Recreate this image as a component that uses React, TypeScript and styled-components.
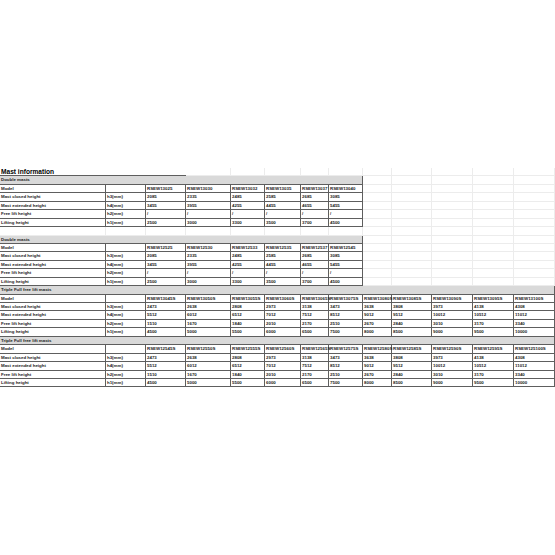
import React from "react";
import styled, { createGlobalStyle } from "styled-components";

const GlobalStyle = createGlobalStyle`
  html, body {
    margin: 0;
    padding: 0;
    background: #ffffff;
  }
  body {
    font-family: "Liberation Sans", Arial, sans-serif;
    color: #000000;
  }
`;

const COLUMNS = "106px 40px 40px 45px 34px 36px 28px 34px 29px 40px 41px 41px 41px";

type Row = { label: string; unit: string; values: string[] };

interface Section {
  title: string;
  models: string[];
  rows: Row[];
}

const doubleRows: Row[] = [
  { label: "Mast closed height", unit: "h3(mm)", values: ["2085", "2335", "2485", "2585", "2685", "3085"] },
  { label: "Mast extended height", unit: "h4(mm)", values: ["3455", "3955", "4255", "4455", "4655", "5455"] },
  { label: "Free lift height", unit: "h2(mm)", values: ["/", "/", "/", "/", "/", "/"] },
  { label: "Lifting height", unit: "h1(mm)", values: ["2500", "3000", "3300", "3500", "3700", "4500"] },
];

const tripleRows: Row[] = [
  {
    label: "Mast closed height",
    unit: "h3(mm)",
    values: ["2473", "2638", "2808", "2973", "3138", "3473", "3638", "3808", "3973", "4138", "4308"],
  },
  {
    label: "Mast extended height",
    unit: "h4(mm)",
    values: ["5512", "6012", "6512", "7012", "7512", "8512", "9012", "9512", "10012", "10512", "11012"],
  },
  {
    label: "Free lift height",
    unit: "h2(mm)",
    values: ["1510", "1670", "1840", "2010", "2170", "2510", "2670", "2840", "3010", "3170", "3340"],
  },
  {
    label: "Lifting height",
    unit: "h1(mm)",
    values: ["4500", "5000", "5500", "6000", "6500", "7500", "8000", "8500", "9000", "9500", "10000"],
  },
];

const sections: Section[] = [
  {
    title: "Double masts",
    models: ["RSEW13025", "RSEW13030", "RSEW13032", "RSEW13035", "RSEW13037", "RSEW13040"],
    rows: doubleRows,
  },
  {
    title: "Double masts",
    models: ["RSEW12525", "RSEW12530", "RSEW12533", "RSEW12535", "RSEW12537", "RSEW12545"],
    rows: doubleRows,
  },
  {
    title: "Triple Full free lift masts",
    models: [
      "RSEW13045S", "RSEW13050S", "RSEW13055S", "RSEW13060S", "RSEW13065S", "RSEW13075S",
      "RSEW13080S", "RSEW13085S", "RSEW13090S", "RSEW13095S", "RSEW13100S",
    ],
    rows: tripleRows,
  },
  {
    title: "Triple Full free lift masts",
    models: [
      "RSEW12545S", "RSEW12550S", "RSEW12555S", "RSEW12560S", "RSEW12565S", "RSEW12575S",
      "RSEW12580S", "RSEW12585S", "RSEW12590S", "RSEW12595S", "RSEW125100S",
    ],
    rows: tripleRows,
  },
];

const TOTAL_COLS = 13;

const App = (): JSX.Element => {
  const renderFaint = (count: number, keyBase: string) =>
    Array.from({ length: count }).map((_, i) => <FaintCell key={`${keyBase}-${i}`} />);

  return (
    <>
      <GlobalStyle />
      <Page>
        <Sheet>
          <TitleCell>Mast information</TitleCell>
          {renderFaint(TOTAL_COLS - 3, "title")}

          {sections.map((section, s) => {
            const used = 2 + section.models.length;
            const spare = TOTAL_COLS - used;
            return (
              <React.Fragment key={s}>
                {s === 1 && renderFaint(TOTAL_COLS, "gap")}
                <Band span={used}>{section.title}</Band>
                {renderFaint(spare, `band-${s}`)}

                <Cell>Model</Cell>
                <Cell />
                {section.models.map((m) => (
                  <Cell key={m}>{m}</Cell>
                ))}
                {renderFaint(spare, `model-${s}`)}

                {section.rows.map((row, r) => (
                  <React.Fragment key={row.label}>
                    <Cell>{row.label}</Cell>
                    <Cell>{row.unit}</Cell>
                    {row.values.map((v, i) => (
                      <Cell key={i}>{v}</Cell>
                    ))}
                    {renderFaint(spare, `row-${s}-${r}`)}
                  </React.Fragment>
                ))}
              </React.Fragment>
            );
          })}
        </Sheet>
      </Page>
    </>
  );
};

export default App;

const Page = styled.div`
  width: 555px;
  height: 555px;
  padding-top: 168px;
  box-sizing: border-box;
  overflow: hidden;
`;

const Sheet = styled.div`
  display: grid;
  grid-template-columns: ${COLUMNS};
  grid-auto-rows: 8.45px;
`;

const Cell = styled.div`
  box-sizing: border-box;
  border-right: 1px solid #5e5e5e;
  border-bottom: 1px solid #5e5e5e;
  font-size: 4.4px;
  font-weight: 700;
  line-height: 7.4px;
  padding-left: 1px;
  white-space: nowrap;
  overflow: visible;
  color: #1a1a1a;
`;

const FaintCell = styled.div`
  box-sizing: border-box;
  border-right: 1px solid #ececec;
  border-bottom: 1px solid #ececec;
`;

const TitleCell = styled.div`
  grid-column: span 3;
  font-size: 6.6px;
  font-weight: 700;
  line-height: 8.4px;
  padding-left: 1px;
  white-space: nowrap;
  color: #000000;
  border-bottom: 1px solid #5e5e5e;
`;

const Band = styled.div<{ span: number }>`
  grid-column: span ${(p) => p.span};
  box-sizing: border-box;
  background: #d9d9d9;
  border-right: 1px solid #5e5e5e;
  border-bottom: 1px solid #5e5e5e;
  font-size: 4.4px;
  font-weight: 700;
  line-height: 7.4px;
  padding-left: 1px;
  white-space: nowrap;
  color: #1a1a1a;
`;
